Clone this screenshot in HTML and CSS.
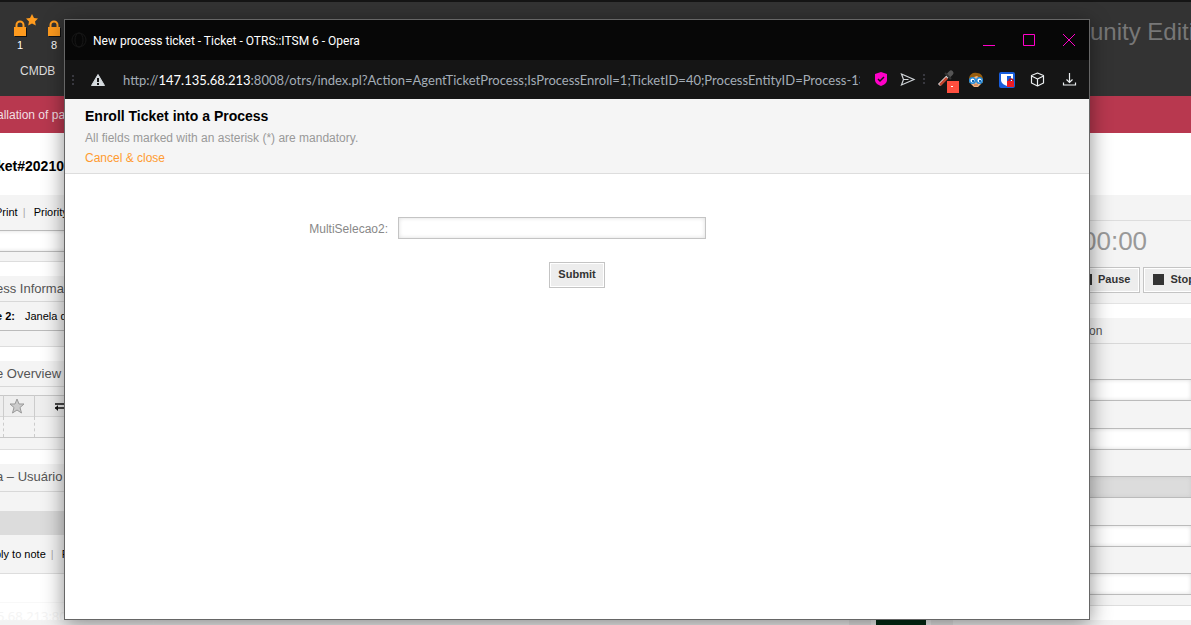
FILE: index.html
```html
<!DOCTYPE html>
<html lang="en">
<head>
<meta charset="utf-8">
<title>New process ticket - Ticket - OTRS::ITSM 6</title>
<link rel="stylesheet" href="styles.css">
</head>
<body>
<div class="page">
  <header class="site-header">
    <div class="site-tools">
      <div class="lockers">
        <a class="locker" href="#">
          <svg width="24" height="24" viewBox="0 0 24 24"><path fill="#111" d="M2 14h12v9H2z"/><path fill="none" stroke="#ff9b1e" stroke-width="2" d="M3.500 14v-3a3.500 3.500 0 0 1 7 0v3"/><path fill="#ff9b1e" d="M1 13h12v9H1zM19 0l2 4 4 .4-3 3 .8 4.200-3.800-2-3.800 2 .8-4.200-3-3 4-.4z"/></svg>
          <span>1</span>
        </a>
        <a class="locker" href="#">
          <svg width="24" height="24" viewBox="0 0 24 24"><path fill="#111" d="M2 14h12v9H2z"/><path fill="none" stroke="#ff9b1e" stroke-width="2" d="M3.500 14v-3a3.500 3.500 0 0 1 7 0v3"/><path fill="#ff9b1e" d="M1 13h12v9H1z"/></svg>
          <span>8</span>
        </a>
      </div>
      <a class="nav-link" href="#">CMDB</a>
    </div>
    <div class="brand">munity Edition</div>
  </header>
  <div class="notice">allation of pac</div>

  <main class="content">
    <div class="left-col">
      <h1 class="ticket-title">ket#20210</h1>
      <div class="actions"><a href="#">Print</a><i>|</i><a href="#">Priority</a></div>
      <div class="filter"><input class="box-field" type="text" aria-label="Article filter"></div>
      <div class="box-end"></div>
      <section class="widget">
        <h2>ess Informati</h2>
        <p class="process-row"><b>e 2:</b><span>Janela de</span></p>
        <div class="foot"></div>
      </section>
      <section class="widget">
        <h2>e Overview</h2>
        <table class="articles">
          <tr class="articles-head"><td></td><td><svg width="16" height="16" viewBox="0 0 16 16"><path fill="#ccc" stroke="#999" d="M8 1l2 5h5l-4 3.500 1.500 5.500L8 12l-4.500 3L5 9.500 1 6h5z"/></svg></td><td><svg width="12" height="10" viewBox="0 0 12 10"><path fill="none" stroke="#111" stroke-width="1.500" d="M0 3h12M12 7H0"/><path fill="#111" d="M9 0l3 3-3 3zM3 4v6L0 7z"/></svg></td></tr>
          <tr><td></td><td></td><td></td></tr>
        </table>
      </section>
      <section class="widget last">
        <h2>a – Usuário</h2>
        <div class="message-bar"></div>
        <div class="reply-row"><a href="#">ply to note</a><i>|</i><a href="#">Forward</a></div>
      </section>
      <div class="status">5.68.213:8008/otrs/index.pl</div>
    </div>

    <div class="right-col">
      <div class="bar"></div>
      <div class="timer">00:00</div>
      <div class="timer-buttons">
        <button type="button"><b></b>Pause</button>
        <button type="button"><b></b>Stop</button>
      </div>
      <h2 class="side-title">on</h2>
      <div class="fields">
        <input type="text" aria-label="Field 1">
        <input type="text" aria-label="Field 2">
        <input type="text" aria-label="Field 3" disabled>
        <input type="text" aria-label="Field 4">
        <input type="text" aria-label="Field 5">
      </div>
    </div>
  </main>
  <footer class="thumbs"><span></span><span class="thumb"></span><span></span></footer>
</div>

<div class="window" role="dialog" aria-labelledby="window-title">
  <div class="titlebar">
    <svg class="opera" width="16" height="16" viewBox="0 0 16 16"><g fill="none" stroke="#171717"><circle cx="8" cy="8" r="7"/><ellipse cx="8" cy="8" rx="4" ry="7"/></g></svg>
    <span id="window-title">New process ticket - Ticket - OTRS::ITSM 6 - Opera</span>
    <div class="window-buttons">
      <button type="button" aria-label="Minimize"><svg width="12" height="12" viewBox="0 0 12 12"><path stroke="#ff00c8" d="M0 11.500h12"/></svg></button>
      <button type="button" aria-label="Maximize"><svg width="12" height="12" viewBox="0 0 12 12"><path fill="none" stroke="#ff00c8" d="M.5.500h11v11H.5z"/></svg></button>
      <button type="button" aria-label="Close"><svg width="12" height="12" viewBox="0 0 12 12"><path stroke="#ff00c8" d="M0 0l12 12M12 0L0 12"/></svg></button>
    </div>
  </div>
  <div class="addressbar">
    <svg width="4" height="12" viewBox="0 0 4 12"><path fill="#38383f" d="M1 1h2v2H1zM1 5h2v2H1zM1 9h2v2H1z"/></svg>
    <svg class="warn" width="14" height="12" viewBox="0 0 14 12"><path fill="#d5dade" stroke="#d5dade" stroke-linejoin="round" d="M7 .5l6.500 11H.5z"/><path fill="#151515" d="M6 4h2v4H6zM6 9h2v2H6z"/></svg>
    <div class="url">http://<b>147.135.68.213</b>:8008/otrs/index.pl?Action=AgentTicketProcess;IsProcessEnroll=1;TicketID=40;ProcessEntityID=Process-137</div>
    <div class="tools">
      <svg width="16" height="16" viewBox="0 0 16 16"><path fill="#ff00c8" d="M9 0l6 2v6c0 3-3 5-6 6-3-1-6-3-6-6V2z"/><path fill="none" stroke="#151515" stroke-width="1.500" d="M6 7l2 2 4-4"/></svg>
      <svg class="send" width="16" height="16" viewBox="0 0 16 16"><path fill="none" stroke="#d0d4d8" stroke-width="1.200" d="M2.500 2L15 7.500 2.500 13l2-5.500zM4.500 7.500h5"/></svg>
      <svg class="dots" width="4" height="12" viewBox="0 0 4 12"><path fill="#38383f" d="M1 0h2v2H1zM1 4h2v2H1zM1 8h2v2H1z"/></svg>
      <svg class="picker" width="22" height="22" viewBox="0 0 22 22"><path stroke="#ddd" stroke-width="3" d="M2 13l9-9"/><path stroke="#c0452e" stroke-width="2.500" d="M3 13l7-7"/><path stroke="#555" stroke-width="5" stroke-linecap="round" d="M12 3l2-2"/><path stroke="#333" stroke-width="2" d="M8 1l6 6"/><path fill="#ff4f3f" d="M10 9h12v12H10z"/><path fill="#fff" d="M14 14h2v1h-2z"/></svg>
      <svg width="16" height="16" viewBox="0 0 16 16"><path fill="#985d0d" d="M1 11V6c1-4 4-6 8-5 4 0 6 3 6 7v3z"/><path fill="#f1b683" d="M3 6l6-2 4 3v5l-3 3H6l-3-3z"/><g fill="#fff" stroke="#2288d8" stroke-width="1.500"><circle cx="4.500" cy="8.500" r="2.800"/><circle cx="11.500" cy="8.500" r="2.800"/></g><path fill="#1667b3" d="M4 8h2v2H4zM11 8h2v2h-2z"/><path stroke="#b66b50" d="M6 13h4"/></svg>
      <svg width="16" height="16" viewBox="0 0 16 16"><rect width="16" height="16" rx="2" fill="#175ddc"/><path fill="#fff" d="M2 2h12v6c0 3-3 5-6 6-3-1-6-3-6-6z"/><path fill="#175ddc" d="M8 4h4v5l-4 3z"/><path fill="none" stroke="#a9131a" stroke-width="1.500" d="M10 10V9a2 2 0 0 1 4 0v2"/><path fill="#ed1c24" d="M8 9h7v6H8z"/></svg>
      <svg width="16" height="16" viewBox="0 0 16 16"><path fill="none" stroke="#eceff1" stroke-width="1.200" stroke-linejoin="round" d="M7.500 1l6 2.500v7.500l-6 3-6-3V3.500zM1.500 4l6 3 6-3M7.500 7v7"/></svg>
      <svg width="16" height="16" viewBox="0 0 16 16"><path fill="none" stroke="#eceff1" stroke-width="1.200" d="M8.500 1v9M5.500 7.500l3 3 3-3M2.500 10.500V13h12v-2.500"/></svg>
    </div>
  </div>
  <div class="form-header">
    <h1>Enroll Ticket into a Process</h1>
    <p>All fields marked with an asterisk (*) are mandatory.</p>
    <a href="#">Cancel &amp; close</a>
  </div>
  <form class="process-form">
    <div class="form-row">
      <label for="multi">MultiSelecao2:</label>
      <input id="multi" type="text">
    </div>
    <button type="button" class="submit">Submit</button>
  </form>
</div>
</body>
</html>
```
FILE: styles.css
```css
* { box-sizing: border-box; }
body {
  margin: 0;
  height: 100vh;
  position: relative;
  overflow: hidden;
  background: #fff;
  color: #000;
  font: 11px/16px "Liberation Sans", Arial, sans-serif;
}
h1, h2, p { margin: 0; }
a { color: inherit; text-decoration: none; }
svg { display: block; flex: none; overflow: visible; }
button, input { font: inherit; border-radius: 0; }

.page { overflow: hidden; white-space: nowrap; }

/* Site header */
.site-header {
  display: flex;
  justify-content: space-between;
  height: 96px;
  border-top: 2px solid #151515;
  background: #333;
  color: #fff;
  overflow: hidden;
}
.site-tools { padding: 12px 0 0 13px; }
.lockers { display: flex; gap: 10px; }
.locker { display: flex; flex-direction: column; width: 24px; }
.locker span { width: 14px; margin-top: -1px; text-align: center; }
.nav-link { display: block; padding: 8px 0 0 7px; font-size: 12px; line-height: 20px; color: #ddd; }
.brand { width: 121px; padding-top: 14px; font-size: 24px; line-height: 32px; color: #777; }
.notice { height: 37px; background: #b8384f; color: #f2dfe2; font-size: 12px; line-height: 38px; text-indent: -3px; }

/* Ticket page behind the window */
.content { display: flex; justify-content: space-between; height: 487px; }
.left-col { width: 130px; }
.ticket-title { height: 62px; padding-top: 2px; font-size: 14px; line-height: 62px; text-indent: -3px; }
.actions, .reply-row { display: flex; background: #f4f4f4; font-size: 11px; }
.actions { height: 35px; padding-left: 1px; margin-left: -6px; line-height: 35px; }
.actions i, .reply-row i { width: 16px; padding-left: 5px; color: #aaa; font-style: normal; }
.filter { margin-left: -8px; }
.box-field, .fields input {
  display: block;
  width: 100%;
  height: 22px;
  border: 1px solid #bbb;
  border-width: 1px 0;
  background: #fff;
  box-shadow: inset 0 0 4px #ddd;
}
.box-end { height: 10px; background: #f4f4f4; border-bottom: 1px solid #ddd; }
.widget { margin-top: 14px; background: #f4f4f4; border-bottom: 1px solid #ddd; }
.widget h2, .side-title { height: 26px; border-bottom: 1px solid #d8d8d8; color: #555; font-size: 12px; font-weight: 400; line-height: 26px; }
.widget h2 { font-size: 13px; text-indent: -4px; }
.process-row { display: flex; gap: 10px; height: 29px; margin-left: -4px; line-height: 28px; border-bottom: 1px solid #bbb; }
.foot { height: 15px; }
.articles { width: 100%; margin: 8px 0 11px; border-collapse: collapse; table-layout: fixed; border: 1px solid #c8c8c8; border-width: 1px 0; }
.articles tr { height: 21px; }
.articles td { padding: 0 0 0 5px; border-right: 1px dashed #ccc; }
.articles td:first-child { width: 3px; padding: 0; }
.articles td:nth-child(2) { width: 31px; }
.articles td:last-child { padding-left: 20px; }
.articles-head { background: #eee; border-bottom: 1px solid #d8d8d8; }
.articles-head td { border-right-style: solid; }
.widget.last h2 { height: 28px; }
.message-bar { height: 24px; margin-top: 19px; background: #dcdcdc; }
.reply-row { height: 38px; margin-left: -5px; line-height: 38px; }
.status { margin-top: 28px; border-top: 1px solid #f8f8f8; color: #f4f4f4; font: 13px/26px "Open Sans", sans-serif; text-indent: -3px; }

.right-col { width: 140px; padding-top: 62px; }
.bar { height: 26px; background: #f4f4f4; border-bottom: 1px solid #ddd; }
.timer { padding: 4px 0 0 31px; background: #f4f4f4; color: #999; font-size: 26px; line-height: 32px; }
.timer-buttons { display: flex; gap: 3px; height: 47px; padding: 10px 0 10px 20px; border-bottom: 1px solid #e3e3e3; background: #f4f4f4; overflow: hidden; }
.timer-buttons button, .submit {
  border: 1px solid #c4c4c4;
  background: #ededed;
  box-shadow: inset 0 0 0 1px #fff;
  color: #333;
  font-weight: 700;
}
.timer-buttons button { display: flex; flex: none; align-items: center; gap: 6px; padding: 0 9px 2px; line-height: 22px; }
.timer-buttons b { width: 11px; height: 11px; background: #333; }
.side-title { margin-top: 14px; padding-left: 38px; background: #f4f4f4; }
.fields { display: flex; flex-direction: column; justify-content: space-between; height: 262px; padding: 35px 0 10px; background: #f4f4f4; border-bottom: 1px solid #ddd; }
.fields input:disabled { background: #dcdcdc; box-shadow: inset 0 0 4px #ccc; }
.thumbs { display: flex; height: 6px; padding-left: 849px; background: #f2f2f2; }
.thumbs span { width: 22px; background: #e6e6e6; }
.thumbs .thumb { width: 50px; margin: 0 5px; background: #032b14; }

/* Popup window floating over the ticket page */
.window {
  position: absolute;
  inset: 19px 101px 5px 64px;
  display: flex;
  flex-direction: column;
  border: 1px solid #666;
  background: #fff;
  box-shadow: 0 4px 20px rgba(0, 0, 0, .45);
}
.titlebar { display: flex; align-items: center; gap: 6px; height: 40px; padding: 0 14px 0 6px; background: #070707; color: #fff; font: 12px/16px Roboto, sans-serif; white-space: nowrap; }
.titlebar span { padding-top: 2px; }
.window-buttons { display: flex; gap: 28px; margin-left: auto; }
.window-buttons button { padding: 0; border: 0; background: none; }
.addressbar { display: flex; align-items: center; height: 39px; padding: 0 12px 0 6px; background: #151515; color: #a4adb7; font: 13px/20px Lato, sans-serif; }
.warn { margin: 0 18px 0 16px; }
.url { flex: 1; min-width: 0; overflow: hidden; white-space: nowrap; }
.url b { color: #fff; font-weight: 400; }
.tools { display: flex; align-items: center; gap: 15px; padding-left: 12px; }
.send { margin-left: -4px; }
.dots { margin-left: -8px; }
.picker { margin: 6px -6px 0 -4px; }
.form-header { padding: 7px 20px 5px; border-bottom: 1px solid #ddd; background: #f5f5f5; font-size: 12px; line-height: 20px; }
.form-header h1 { margin-bottom: 1px; font-size: 14px; line-height: 21px; }
.form-header p { color: #999; }
.form-header a { display: block; color: #ff9b30; }
.process-form { display: flex; flex-direction: column; align-items: center; gap: 23px; padding-top: 43px; }
.form-row { display: grid; grid-template-columns: 323fr 308fr 373fr; column-gap: 10px; width: 100%; }
.form-row label { color: #888; font-size: 12px; line-height: 24px; height: 22px; text-align: right; }
.form-row input { width: 100%; height: 22px; border: 1px solid #c4c4c4; box-shadow: inset 0 0 4px #ddd; }
.submit { height: 26px; padding: 0 8px 2px; line-height: 22px; }
```
